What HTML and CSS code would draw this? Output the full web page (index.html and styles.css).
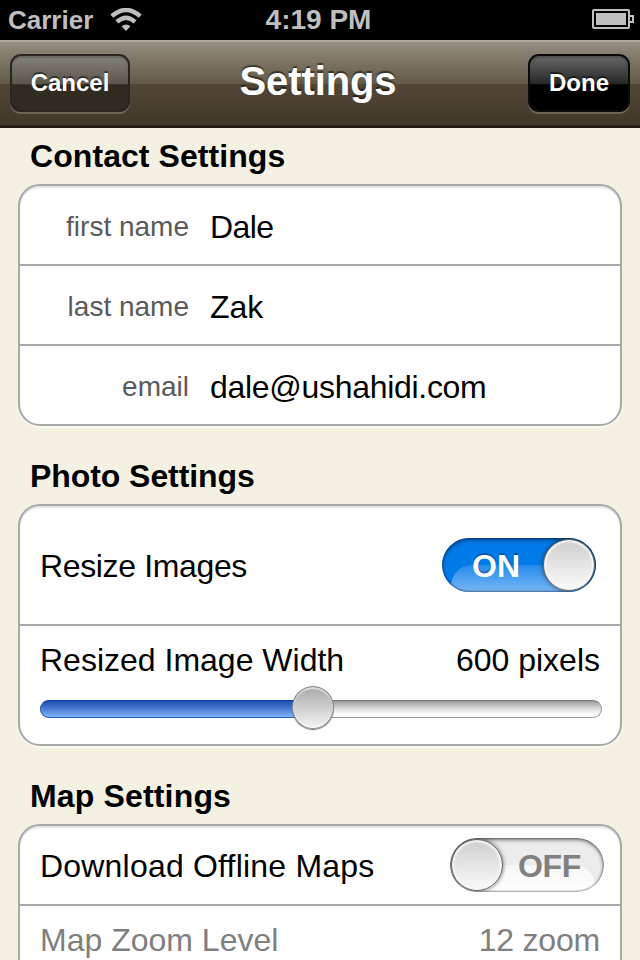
FILE: index.html
```html
<!DOCTYPE html>
<html lang="en">
<head>
<meta charset="utf-8">
<title>Settings</title>
<link rel="stylesheet" href="styles.css">
</head>
<body>
<div class="screen">
  <header class="status">
    <div class="status-left">
      <span class="carrier">Carrier</span>
      <svg class="wifi" width="32" height="24" viewBox="0 0 32 24" fill="none" stroke="#bfbfbf">
        <path d="M1.8 8.2Q16-4.2 30.2 8.2" stroke-width="4.4"/>
        <path d="M6.9 13.9Q16 5.6 25.1 13.9" stroke-width="4.2"/>
        <path d="M16 23l-4.4-4.8Q16 14.6 20.4 18.2Z" fill="#bfbfbf" stroke="none"/>
      </svg>
    </div>
    <span class="clock">4:19 PM</span>
    <svg class="battery" width="42" height="20" viewBox="0 0 42 20">
      <rect x="1" y="1" width="36" height="18" rx="1" fill="none" stroke="#bfbfbf" stroke-width="2"/>
      <rect x="4" y="4" width="30" height="12" fill="#bfbfbf"/>
      <path d="M38 7h3v6h-3" fill="none" stroke="#bfbfbf" stroke-width="2"/>
    </svg>
  </header>
  <nav class="navbar">
    <button class="btn cancel"><span>Cancel</span></button>
    <h1 class="title">Settings</h1>
    <button class="btn done"><span>Done</span></button>
  </nav>
  <main>
    <section>
      <h2><span class="h-contact">Contact Settings</span></h2>
      <div class="card">
        <div class="row field"><span class="label">first name</span><span class="value v-first">Dale</span></div>
        <div class="row field"><span class="label">last name</span><span class="value v-last">Zak</span></div>
        <div class="row field"><span class="label l-email">email</span><span class="value v-email">dale@ushahidi.com</span></div>
      </div>
    </section>
    <section>
      <h2><span class="h-photo">Photo Settings</span></h2>
      <div class="card">
        <div class="row tall"><span class="t-resize">Resize Images</span>
          <div class="switch on"><span class="switch-text">ON</span><i class="knob"></i></div>
        </div>
        <div class="row stacked">
          <div class="line"><span class="t-width">Resized Image Width</span><span class="t-pixels">600 pixels</span></div>
          <div class="slider"><div class="fill"></div><i class="thumb"></i></div>
        </div>
      </div>
    </section>
    <section>
      <h2><span class="h-map">Map Settings</span></h2>
      <div class="card">
        <div class="row maps"><span class="t-offline">Download Offline Maps</span>
          <div class="switch off"><i class="knob"></i><span class="switch-text">OFF</span></div>
        </div>
        <div class="row stacked dim">
          <div class="line"><span class="t-level">Map Zoom Level</span><span class="t-zoom">12 zoom</span></div>
        </div>
      </div>
    </section>
  </main>
</div>
</body>
</html>
```
FILE: styles.css
```css
* { box-sizing: border-box; }
body { margin: 0; background: #f4f0e2; font-family: "Liberation Sans", Arial, sans-serif; color: #000; }
.screen { width: 640px; height: 960px; overflow: hidden; }
h1, h2 { margin: 0; }
span { white-space: nowrap; }

.status { height: 40px; background: #000; color: #bfbfbf; display: grid; grid-template-columns: 1fr auto 1fr; align-items: center; padding: 0 6px 0 8px; font-weight: bold; font-size: 28px; line-height: 40px; }
.status-left { display: flex; align-items: center; gap: 17px; }
.carrier { font-size: 26px; }
.clock { margin-left: -5px; }
.battery { justify-self: end; margin-top: -2px; }

.navbar { height: 88px; display: flex; justify-content: space-between; align-items: flex-start; padding: 12px 10px 0; background: linear-gradient(#969284 0, #8e897b 4px, #625845 42px, #514636 42px, #42382a 83px, #3b3125 83px, #211a12 84px, #211a12 86px); border-top: 2px solid #aba89c; }
.btn { height: 58px; padding: 0; border: 2px solid #29261f; border-radius: 11px; color: #fff; font: bold 24px/54px "Liberation Sans", Arial, sans-serif; text-shadow: 0 -2px 1px rgba(0,0,0,.5); box-shadow: 0 2px 0 rgba(255,255,255,.22), inset 0 2px 1px rgba(0,0,0,.2); }
.cancel { width: 120px; background: linear-gradient(#85827a, #5b564d 28px, #484136 28px, #302b21 29px, #302a20); }
.done { width: 102px; border-color: #0b0b0b; background: linear-gradient(#686868, #262626 28px, #111 28px, #000 29px, #000); }
.btn span { display: block; margin-top: -1px; }
.title { color: #fff; font-size: 40px; line-height: 54px; text-shadow: 0 -2px 1px rgba(0,0,0,.5); margin-left: -22px; letter-spacing: -.1px; }

h2 { height: 56px; padding-left: 30px; font-size: 32px; line-height: 56px; }
section + section { margin-top: 22px; }
.card { margin: 0 18px; border: 2px solid #a8a8a8; border-radius: 22px; background: #fff; box-shadow: 0 2px 0 #fbf9f2, inset 0 2px 1px #e4e4e4; }
.row { display: flex; height: 78px; align-items: center; justify-content: space-between; padding: 0 20px; font-size: 32px; }
.row + .row { border-top: 2px solid #a8a8a8; height: 80px; }
.field { justify-content: flex-start; gap: 21px; padding-top: 4px; }
.label { width: 149px; text-align: right; font-size: 28px; color: #5a5a5a; }
.row.tall { height: 118px; padding-right: 24px; }
.row.maps { padding-right: 16px; }
.row + .row.stacked { display: block; height: 120px; padding: 15px 18px 0 20px; }
.line { display: flex; justify-content: space-between; line-height: 38px; padding-right: 2px; }
.dim { color: #7f7f7f; }
.h-contact { letter-spacing: .07px; }
.h-photo { letter-spacing: -.07px; }
.h-map { letter-spacing: .16px; }
.v-first { letter-spacing: -.6px; }
.v-email { letter-spacing: -.3px; }
.t-resize { letter-spacing: -.36px; padding-top: 2px; }
.t-offline { letter-spacing: .2px; padding-top: 2px; }
.t-zoom { letter-spacing: -.2px; }

.switch { position: relative; display: flex; align-items: center; width: 154px; height: 54px; border-radius: 27px; font-weight: bold; font-size: 32px; overflow: hidden; }
.switch-text { position: relative; line-height: 54px; padding-top: 1px; }
.switch::before { content: ""; position: absolute; top: 27px; height: 42px; border-radius: 22px; }
.switch::after { content: ""; position: absolute; inset: 0; border-radius: 27px; pointer-events: none; }
.on { justify-content: space-between; padding-left: 30px; color: #fff; background: #007be8; text-shadow: 0 -2px 1px rgba(0,40,100,.45); }
.on::before { left: 9px; right: 9px; background: linear-gradient(#248bec, #75b6f5 26px); }
.on::after { box-shadow: inset 0 2px 4px rgba(0,30,80,.6), inset 0 0 2px 1px rgba(40,50,80,.5); }
.off { justify-content: space-between; padding-right: 23px; color: #808080; background: #ececec; }
.off::before { left: 9px; right: 9px; background: linear-gradient(#f6f6f6, #fff 26px); }
.off::after { box-shadow: inset 0 2px 4px rgba(0,0,0,.45), inset 0 0 2px 1px rgba(0,0,0,.35); }
.off .switch-text { letter-spacing: -.3px; }
.knob { position: relative; z-index: 1; width: 52px; height: 52px; margin: 0 1px; border-radius: 50%; border: 1px solid #666; background: linear-gradient(#cecece, #fbfbfb); box-shadow: inset 0 0 2px 2px #f6f6f6, 0 0 4px rgba(0,0,0,.6); }

.slider { position: relative; width: 562px; height: 18px; margin-top: 21px; border-radius: 9px; border: 1px solid #999; border-top-color: #777; background: linear-gradient(#999, #cfcfcf 6px, #fff 13px); }
.fill { width: 280px; height: 18px; margin: -1px; border-radius: 9px 0 0 9px; border: 1px solid #2c62b9; border-top-color: #0a3c9c; background: linear-gradient(#1f50ae, #3d70ca 6px, #77aef8 15px); }
.thumb { position: absolute; left: 251px; top: -15px; width: 42px; height: 43px; border-radius: 50%; border: 1px solid #888; background: linear-gradient(#a9a9a9, #f4f4f4); box-shadow: inset 0 2px 1px #ddd, inset 0 -1px 1px #fff, 0 1px 1px #777; }
```
